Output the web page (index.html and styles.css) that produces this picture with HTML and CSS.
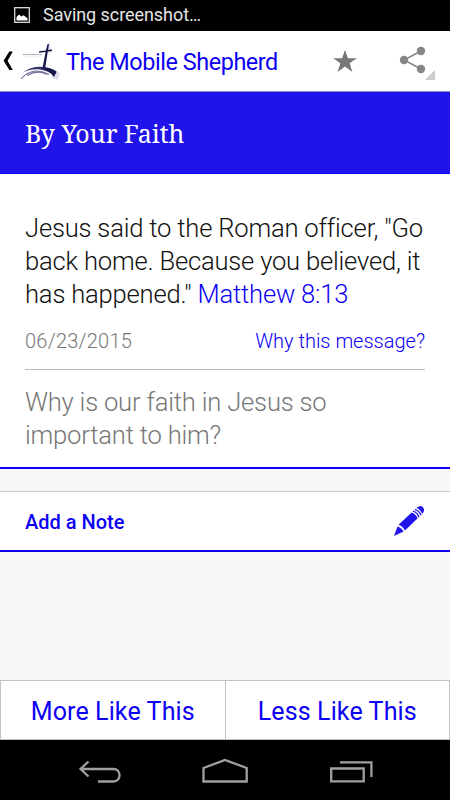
FILE: index.html
```html
<!DOCTYPE html>
<html lang="en">
<head>
  <meta charset="UTF-8">
  <meta name="viewport" content="width=device-width, initial-scale=1">
  <title>The Mobile Shepherd</title>
  <link rel="stylesheet" href="styles.css">
</head>
<body>
  <div class="status-bar">
    <svg width="16" height="16" viewBox="0 0 16 16">
      <rect x="0.7" y="0.7" width="14.6" height="14.6" fill="none" stroke="#ddd" stroke-width="1.3"/>
      <path d="M2.500 13.500V10l2.500-2.500 2.300 2 2.200-1.200 4 3v2.200z" fill="#fff"/>
    </svg>
    <span>Saving screenshot…</span>
  </div>

  <header class="app-bar">
    <svg class="back" width="10" height="20" viewBox="0 0 10 20">
      <path d="M9.800 0.500 4.600 9.800l5.200 9.200H6.300L0.600 9.800 6.300 0.500z" fill="#000"/>
    </svg>
    <svg class="logo" width="40" height="40" viewBox="0 0 40 40">
      <path d="M26 5l3-5v8l2 0-1 4-5-1zM33 29l6 3-2 7-7-3z" fill="#dcdcea"/>
      <path d="M26.600 3l1.300 0-.8 6 3.900-.5-.1 1.600-4.100.5-2.800 17.500h-2.600L24.600 11l-6.600.8.100-1.500 6.800-.8z" fill="#15154a"/>
      <path d="M2 31.500C11 24 26 24 35.500 31l-2.500 4C24 27 12 26.500 2 31.500z" fill="#33336a"/>
      <path d="M20 26.500c6-.5 11.500 1 15.500 4l-2.500 5.500c-2-3.500-6-7-13-9.500z" fill="#15154a"/>
      <path d="M0 38c7-8.500 18-10.500 28-4.500M6 34.500c7-4 13-5 20-1" fill="none" stroke="#6f6f9a" stroke-width="1.100"/>
      <path d="M2 13.600h19" stroke="#9898aa" stroke-width="1" stroke-dasharray="1.600 .5"/>
      <path d="M4 15.700h15" stroke="#d8d8e2" stroke-width=".7" stroke-dasharray="2 1"/>
    </svg>
    <h1>The Mobile Shepherd</h1>
    <svg class="star" width="24" height="23" viewBox="0 0 24 23">
      <path d="M12 0l2.900 8.200h8.900l-7.200 5.100 2.800 8.600-7.400-5.300-7.400 5.300 2.800-8.600L.2 8.200h8.900z" fill="#777"/>
    </svg>
    <svg class="share" width="36" height="36" viewBox="0 0 36 36">
      <path d="M22 5 5 14l17 9" fill="none" stroke="#858585" stroke-width="1.500"/>
      <circle cx="22" cy="5" r="4.200" fill="#858585"/>
      <circle cx="5" cy="14" r="4.200" fill="#858585"/>
      <circle cx="22" cy="23" r="4.200" fill="#858585"/>
      <path d="M36 24v10H26z" fill="#ccc"/>
    </svg>
  </header>

  <h2 class="banner"><span>By Your Faith</span></h2>

  <section class="message">
    <p class="verse">Jesus said to the Roman officer, "Go<br>back home. Because you believed, it<br>has happened." <a href="#">Matthew 8:13</a></p>
    <div class="meta">
      <span class="date">06/23/2015</span>
      <a href="#">Why this message?</a>
    </div>
    <p class="question">Why is our faith in Jesus so<br>important to him?</p>
  </section>

  <section class="note">
    <span>Add a Note</span>
    <svg width="32" height="32" viewBox="0 0 32 32">
      <path d="M1 31 4.500 21.500c2.500.6 5 2.800 6 5z" fill="#2014ea"/>
      <path d="M5.500 19.800 18.700 7.400c2.800 1 5 3.200 6 5.800L12 25.600c-1.200-2.600-3.500-4.800-6.500-5.800z" fill="#2014ea"/>
      <path d="M20 6.200c3 1 5 3 6 6M22 4.300c3 1 5 3.200 6 6" fill="none" stroke="#2014ea" stroke-width="1.300"/>
      <path d="M23.400 2.800C26 .7 29 .7 30.300 2.700c1.300 2 .9 4.300-1.200 6.400-1-3-3-5.300-5.700-6.300z" fill="#2014ea"/>
    </svg>
  </section>

  <div class="actions">
    <button type="button" class="more">More Like This</button>
    <button type="button" class="less">Less Like This</button>
  </div>

  <nav class="nav-bar">
    <svg width="450" height="60" viewBox="0 0 450 60" fill="none" stroke="#a0a0a0" stroke-width="2.300">
      <path d="M88.500 21.500 80.500 29l8 7.500M81 29h32.500c8 0 8 12.500 0 12.500H98"/>
      <path d="M203.500 41.500V28l21.500-8 21.700 8v13.500z"/>
      <path d="M331.200 28.500h32.500v12.800h-32.500zM340 22.300h31.400V37"/>
    </svg>
  </nav>
</body>
</html>
```
FILE: styles.css
```css
* {
  box-sizing: border-box;
}

body {
  margin: 0;
  height: 800px;
  display: flex;
  flex-direction: column;
  background: #f7f7f7;
  font-family: Roboto, "Liberation Sans", sans-serif;
  overflow: hidden;
}

h1, h2, p {
  margin: 0;
  font-weight: 400;
}

a {
  color: #0c00f4;
  text-decoration: none;
}

.status-bar {
  height: 31px;
  display: flex;
  align-items: center;
  gap: 13px;
  padding: 0 0 1px 14px;
  background: #000;
  color: #e6e6e6;
  font-size: 18px;
  letter-spacing: -0.06px;
}

.status-bar span {
  padding-bottom: 2px;
}

.app-bar {
  height: 61px;
  display: flex;
  align-items: center;
  padding: 0 15px 0 3px;
  background: #fff;
  border-bottom: 1px solid #8c8cc8;
}

.app-bar .logo {
  margin: 0 5px 0 8px;
}

.app-bar h1 {
  padding-top: 2px;
  color: #0c00f4;
  font-size: 23.4px;
  letter-spacing: -0.43px;
  white-space: nowrap;
}

.app-bar .star {
  margin-left: auto;
}

.app-bar .share {
  margin: 5px 0 0 42px;
}

.banner {
  height: 82px;
  display: flex;
  align-items: center;
  padding: 0 25px;
  background: #2014ea;
  border-bottom: 1px solid #0c00f4;
  color: #fff;
  font-family: "Noto Serif", "Droid Serif", "DejaVu Serif Condensed", "Liberation Serif", serif;
  font-size: 25px;
}

.message {
  height: 295px;
  padding: 38px 25px 0;
  background: #fff;
  border-bottom: 2px solid #0c00f4;
}

.verse, .question {
  font-size: 25.6px;
  line-height: 33px;
  font-weight: 300;
  color: #111;
  letter-spacing: -0.2px;
  white-space: nowrap;
}

.meta {
  display: flex;
  justify-content: space-between;
  align-items: center;
  height: 59px;
  padding-top: 2px;
  border-bottom: 1px solid #bbb;
  font-size: 20px;
  font-weight: 300;
}

.meta .date {
  color: #777;
  letter-spacing: 0.25px;
}

.question {
  margin-top: 16px;
  color: #777;
}

.note {
  height: 61px;
  margin-top: 22px;
  padding: 0 25px;
  display: flex;
  justify-content: space-between;
  align-items: center;
  background: #fff;
  border-top: 1px solid #ccc;
  border-bottom: 2px solid #0c00f4;
  color: #0c00f4;
  font-size: 20px;
  font-weight: 500;
}

.note span {
  padding-top: 2px;
}

.actions {
  height: 60px;
  margin-top: auto;
  display: flex;
  border: 1px solid #c4c4c4;
  background: #fff;
}

.actions button {
  flex: 1;
  padding: 3px 0 0;
  border: none;
  background: none;
  color: #0c00f4;
  font-family: inherit;
  font-size: 25px;
  letter-spacing: 0.12px;
}

.actions .more {
  border-right: 1px solid #c4c4c4;
}

.nav-bar {
  height: 60px;
  background: #000;
}
```
